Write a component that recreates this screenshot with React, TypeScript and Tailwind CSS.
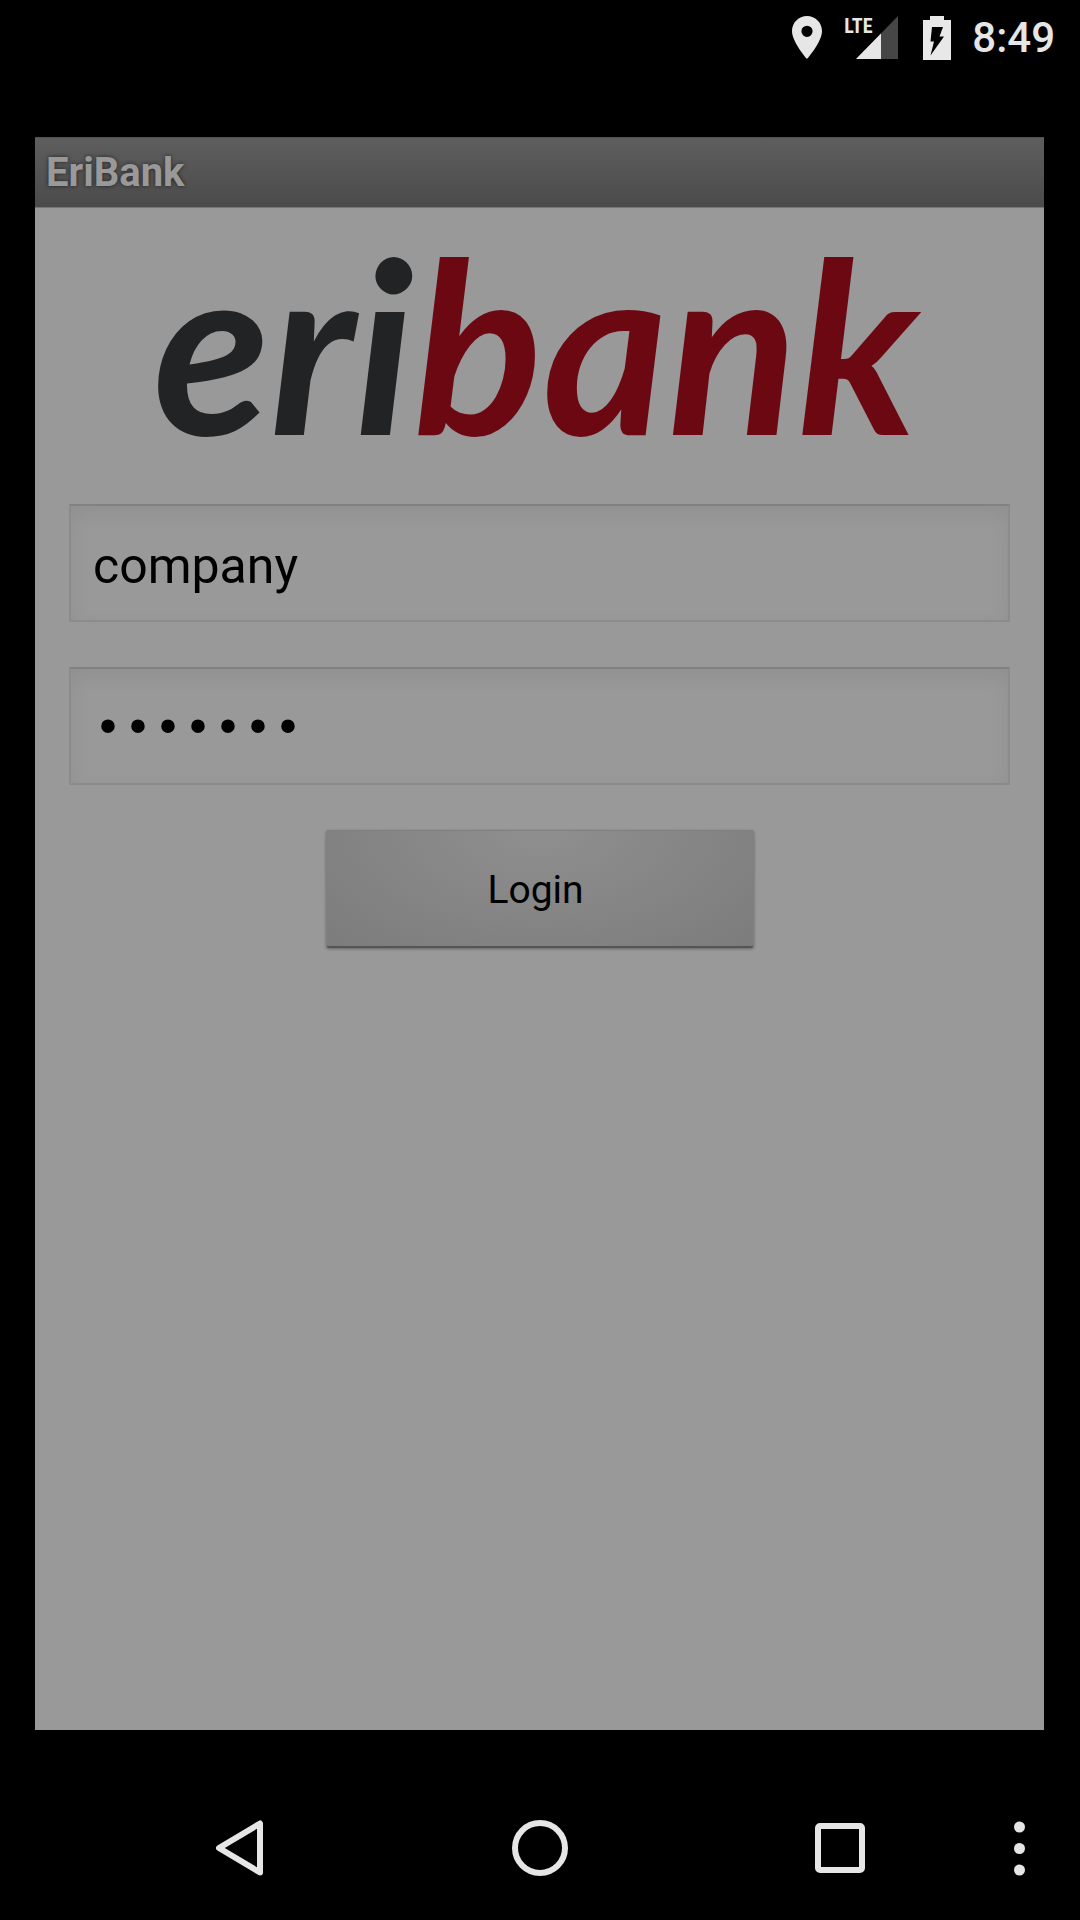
import { useState } from 'react';

function StatusBar() {
  return (
    <header className="flex h-[75px] items-center justify-end pr-[25px] text-[#e6e6e6]">
      <svg className="mr-[22px] h-[44px] w-[30px]" viewBox="0 0 30 44" fill="#e6e6e6" aria-label="Location">
        <path
          fillRule="evenodd"
          d="M15 0C6.700 0 0 6.700 0 15c0 11.200 15 28 15 28s15-16.800 15-28C30 6.700 23.300 0 15 0zm0 9.700a5.600 5.600 0 1 1 0 11.200 5.600 5.600 0 0 1 0-11.200z"
        />
      </svg>
      <div className="relative mr-[25px] h-[44px] w-[54px]">
        <svg className="h-[44px] w-[54px]" viewBox="0 0 54 44" aria-hidden="true">
          <path d="M54 0V43H12Z" fill="#464646" />
          <path d="M37 17.500V43H12Z" fill="#e6e6e6" />
        </svg>
        <span className="absolute top-0 left-0 font-['Liberation_Sans_Narrow','Roboto_Condensed',Roboto,sans-serif] text-[20px] leading-[20px] font-bold">
          LTE
        </span>
      </div>
      <svg className="mr-[21px] h-[44px] w-[28px]" viewBox="0 0 28 44" aria-label="Battery charging">
        <path d="M7 0H21V4H28V44H0V4H7Z" fill="#e8e8e8" />
        <path d="M9 11H20L16.500 20.500H21L7.500 39.500L11 25.500H7.500Z" fill="#000" />
      </svg>
      <time className="text-[42px] leading-[44px] font-medium">8:49</time>
    </header>
  );
}

function Logo() {
  return (
    <h2 className="text-center font-[Lato,sans-serif] text-[240px] leading-[240px] font-bold whitespace-nowrap text-[#222325] italic">
      eri<span className="text-[#6b0812]">bank</span>
    </h2>
  );
}

const fieldClass =
  'h-[118px] w-full border-2 border-[#8b8b8b] border-t-[#818181] bg-[#999] px-[22px] pt-[6px] text-[50px] text-black shadow-[inset_0_8px_20px_rgba(0,0,0,0.06)] outline-none';

function LoginForm() {
  const [user, setUser] = useState('company');
  const [password, setPassword] = useState('company');
  return (
    <form className="flex flex-col items-center gap-[45px] px-[34px]" onSubmit={(e) => e.preventDefault()}>
      <input aria-label="Username" className={fieldClass} value={user} onChange={(e) => setUser(e.target.value)} />
      <input
        aria-label="Password"
        type="password"
        className={`${fieldClass} font-['Liberation_Mono',monospace]`}
        value={password}
        onChange={(e) => setPassword(e.target.value)}
      />
      <button
        type="submit"
        className="h-[118px] w-[428px] rounded-[3px] border border-[#808080] border-b-2 border-b-[#555] bg-[radial-gradient(ellipse_at_top,#8f8f8f,#7c7c7c)] pt-1 pr-2 text-[39px] text-black shadow-[0_1px_3px_rgba(0,0,0,0.35)]"
      >
        Login
      </button>
    </form>
  );
}

const navButton = 'flex flex-1 items-center justify-center';

function NavBar() {
  return (
    <nav className="flex h-[144px] items-stretch pl-[90px]">
      <button aria-label="Back" className={navButton}>
        <svg className="h-14 w-12" viewBox="0 0 48 56" fill="none" stroke="#e6e6e6" strokeWidth="6" strokeLinejoin="round">
          <path d="M44 3.500V52.500L3 28Z" />
        </svg>
      </button>
      <button aria-label="Home" className={navButton}>
        <svg className="size-14" viewBox="0 0 56 56" fill="none" stroke="#e6e6e6" strokeWidth="6">
          <circle cx="28" cy="28" r="25" />
        </svg>
      </button>
      <button aria-label="Recent apps" className={navButton}>
        <svg className="size-[50px]" viewBox="0 0 50 50" fill="none" stroke="#e6e6e6" strokeWidth="6">
          <rect x="3" y="3" width="44" height="44" rx="2" />
        </svg>
      </button>
      <button aria-label="Menu" className="flex w-[90px] items-center pl-6">
        <svg className="h-[55px] w-[11px]" viewBox="0 0 11 55" fill="#e6e6e6">
          <circle cx="5.500" cy="6" r="5.500" />
          <circle cx="5.500" cy="27.500" r="5.500" />
          <circle cx="5.500" cy="49" r="5.500" />
        </svg>
      </button>
    </nav>
  );
}

export default function App() {
  return (
    <div className="flex min-h-screen flex-col bg-black font-[Roboto,sans-serif]">
      <StatusBar />
      <main className="mt-[62px] mr-[36px] mb-[46px] ml-[35px] flex grow flex-col bg-[#999]">
        <h1 className="h-[71px] border-t border-b border-t-[#505050] border-b-[#777] bg-linear-to-b from-[#5e5e5e] to-[#4b4b4b] px-[11px] text-[40px] leading-[70px] font-bold text-[#999] [text-shadow:0_0_4px_rgba(0,0,0,0.6)]">
          EriBank
        </h1>
        <div className="pt-[14px] pr-2 pb-[42px]">
          <Logo />
        </div>
        <LoginForm />
      </main>
      <NavBar />
    </div>
  );
}
